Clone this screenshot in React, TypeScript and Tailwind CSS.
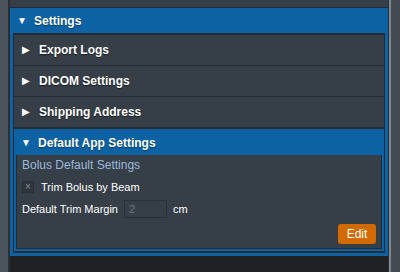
import React from 'react';

const font = { fontFamily: '"Liberation Sans", Arial, sans-serif' };

function Caret({ open }: { open?: boolean }) {
  return (
    <span className="inline-block w-[9px] text-[10px] leading-none text-white">
      {open ? '▼' : '▶'}
    </span>
  );
}

function Row({ label }: { label: string }) {
  return (
    <div className="h-[31px] flex items-center gap-[8px] pl-[8px] bg-[#363e48] border-b border-[#262b31]">
      <Caret />
      <span className="text-[12px] font-bold text-white [text-shadow:0_1px_1px_#1a1d21]">{label}</span>
    </div>
  );
}

export default function App() {
  return (
    <div className="w-[400px] h-[272px] flex bg-[#1f2124] overflow-hidden" style={font}>
      <div className="w-[8px] bg-[#4b535c]" />
      <div className="w-[2px] bg-[#2a2f35]" />
      <div className="flex-1 flex flex-col">
        <div className="h-[8px] bg-[#363e48] border-b border-[#262b31]" />
        <div className="h-[25px] flex items-center gap-[8px] pl-[7px] bg-[#0c62a3]">
          <Caret open />
          <span className="text-[12px] font-bold text-white [text-shadow:0_1px_1px_#0a3a60]">Settings</span>
        </div>
        <div className="border-x-[3px] border-b-[3px] border-[#0c62a3] bg-[#2a2f35]">
          <div className="border-x border-t-2 border-[#262b31]">
            <Row label="Export Logs" />
            <Row label="DICOM Settings" />
            <Row label="Shipping Address" />
            <div className="h-[27px] flex items-center gap-[8px] pl-[7px] pt-[1px] bg-[#0c62a3] border-t border-[#262b31]">
              <Caret open />
              <span className="text-[12px] font-bold text-white [text-shadow:0_1px_1px_#0a3a60]">Default App Settings</span>
            </div>
            <div className="border-x-2 border-b-2 border-[#0c62a3] mb-[2px]">
              <div className="bg-[#363e48] border-x border-b border-[#262b31] px-[5px] pt-[1px] pb-[4px] flex flex-col">
                <div className="text-[12px] text-[#9bbad9] h-[18px] flex items-center">Bolus Default Settings</div>
                <div className="flex items-center h-[26px] gap-[7px]">
                  <div className="w-[12px] h-[12px] bg-[#2e343b] border border-[#2a2f35] flex items-center justify-center text-[10px] leading-none text-[#8a939c]">×</div>
                  <span className="text-[11px] text-white">Trim Bolus by Beam</span>
                </div>
                <div className="flex items-center h-[18px] gap-[6px]">
                  <span className="text-[11px] text-white">Default Trim Margin</span>
                  <div className="w-[43px] h-[18px] border border-[#2b3137] bg-[#363e48] text-[11px] text-[#6b747e] pl-[4px] flex items-center">2</div>
                  <span className="text-[11px] text-white">cm</span>
                </div>
                <div className="flex justify-end mt-[6px]">
                  <button className="w-[38px] h-[20px] rounded-[3px] bg-[#d26a00] text-white text-[12px] flex items-center justify-center">Edit</button>
                </div>
              </div>
            </div>
          </div>
        </div>
        <div className="flex-1 bg-[#1f2124]" />
      </div>
      <div className="w-[1px] bg-[#2a2f35]" />
      <div className="w-[2px] bg-[#7d8893]" />
      <div className="w-[9px] bg-[#434a52]" />
    </div>
  );
}
